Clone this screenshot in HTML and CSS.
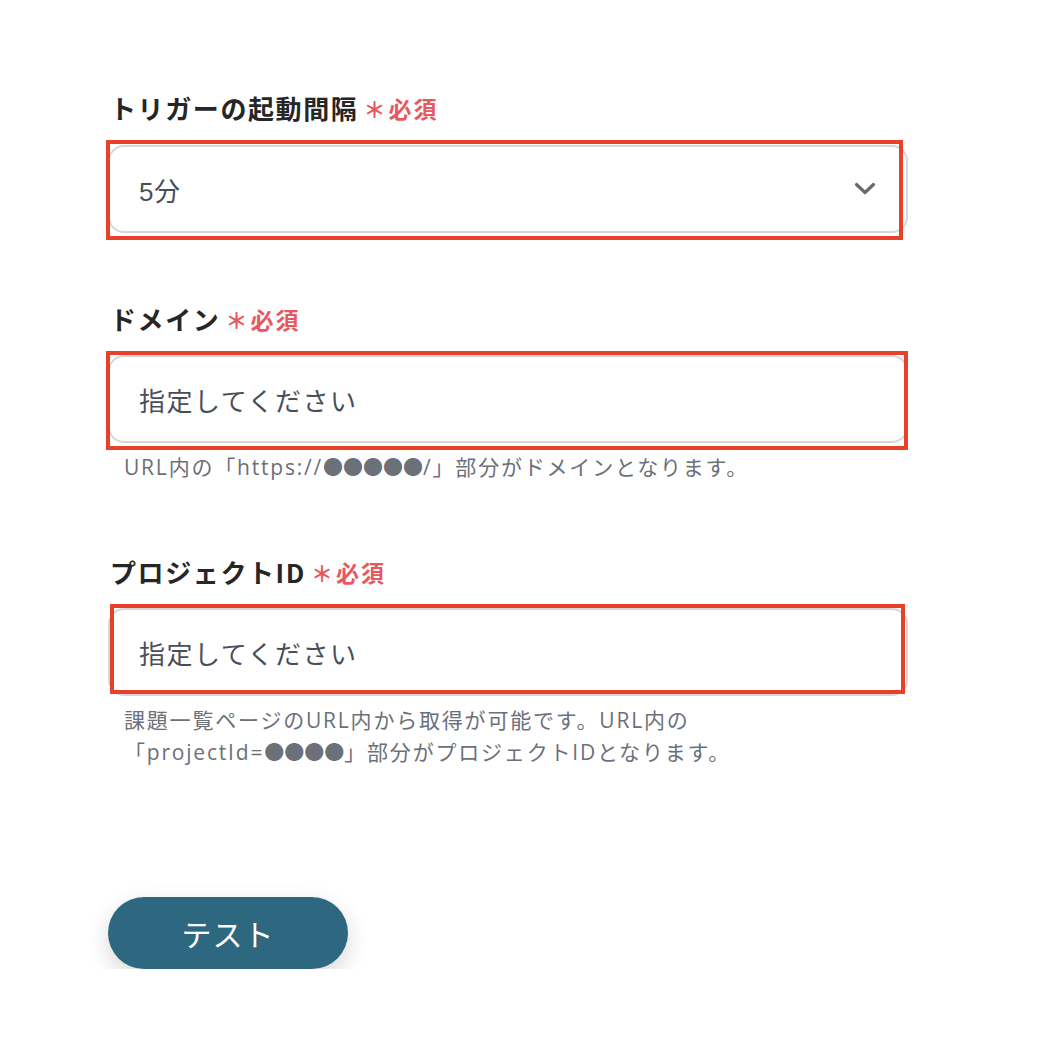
FILE: index.html
```html
<!DOCTYPE html>
<html lang="ja">
<head>
<meta charset="utf-8">
<link rel="stylesheet" href="styles.css">
</head>
<body>
<div class="form">
  <div class="field field-1">
    <div class="label">トリガーの起動間隔<span class="req"><span class="ast">＊</span>必須</span></div>
    <div class="control">
      <div class="input select">
        <span class="value">5分</span>
        <svg class="chev" width="22" height="14" viewBox="0 0 22 14"><path d="M2.5 2.5 L11 10.5 L19.5 2.5" fill="none" stroke="#6a6a6a" stroke-width="3.2" stroke-linecap="round" stroke-linejoin="round"/></svg>
      </div>
      <span class="mark mark-1"></span>
    </div>
  </div>

  <div class="field field-2">
    <div class="label">ドメイン<span class="req"><span class="ast">＊</span>必須</span></div>
    <div class="control">
      <div class="input"><span class="placeholder">指定してください</span></div>
      <span class="mark mark-2"></span>
    </div>
    <p class="help">URL内の「https://<span class="dots">●●●●●</span>/」部分がドメインとなります。</p>
  </div>

  <div class="field field-3">
    <div class="label">プロジェクトID<span class="req"><span class="ast">＊</span>必須</span></div>
    <div class="control">
      <div class="input"><span class="placeholder">指定してください</span></div>
      <span class="mark mark-3"></span>
    </div>
    <p class="help">課題一覧ページのURL内から取得が可能です。URL内の<br>「projectId=<span class="dots">●●●●</span>」部分がプロジェクトIDとなります。</p>
  </div>

  <button class="btn" type="button">テスト</button>
</div>
</body>
</html>
```
FILE: styles.css
```css
* { box-sizing: border-box; }
html, body { margin: 0; padding: 0; background: #ffffff; }
body {
  font-family: "Liberation Sans", "Noto Sans CJK JP", sans-serif;
  color: #262626;
}
.form {
  width: 1048px;
  padding: 92px 0 0 108px;
  display: flex;
  flex-direction: column;
}
.field { display: flex; flex-direction: column; width: 800px; }
.field-2 { margin-top: 70px; }
.field-3 { margin-top: 73px; }
.label {
  font-family: "Noto Sans CJK JP", sans-serif;
  font-weight: 700;
  font-size: 26px;
  line-height: 32px;
  letter-spacing: 1.6px;
  color: #262626;
  display: flex;
  align-items: center;
  padding-left: 2px;
}
.req {
  display: inline-flex;
  align-items: center;
  color: #e8585f;
  font-size: 23px;
  font-weight: 700;
  letter-spacing: 2px;
  margin-left: 5px;
}
.ast { font-size: 22px; font-weight: 700; margin-right: 3px; letter-spacing: 0; }
.control { position: relative; margin-top: 20px; }
.field-1 .control { margin-top: 21px; }
.input {
  height: 88px;
  border: 2px solid #d3d7dc;
  border-radius: 16px;
  background: #fff;
  display: flex;
  align-items: center;
  padding: 0 29px;
  font-family: "Noto Sans CJK JP", sans-serif;
  font-size: 26px;
  letter-spacing: 1.5px;
  color: #4a4f57;
}
.select { justify-content: space-between; }
.value { font-family: "Liberation Sans", "Noto Sans CJK JP", sans-serif; letter-spacing: 0.5px; }
.chev { margin-right: 1px; }
.mark {
  position: absolute;
  border: 4px solid #e8412a;
  pointer-events: none;
}
.mark-1 { left: -2px; top: -5px; right: 5px; bottom: -7px; }
.mark-2 { left: -2px; top: -4px; right: 0; bottom: -7px; }
.mark-3 { left: 2px; top: -4px; right: 3px; bottom: 2px; }
.help {
  margin: 8px 0 0 16px;
  font-family: "Open Sans", "Noto Sans CJK JP", sans-serif;
  font-size: 21px;
  line-height: 32px;
  letter-spacing: 1.8px;
  color: #6b7079;
}
.dots {
  font-family: "Noto Sans CJK JP", sans-serif;
  font-size: 20px;
  letter-spacing: 0;
}
.btn {
  margin-top: 129px;
  width: 240px;
  height: 72px;
  border: none;
  border-radius: 36px;
  background: #2e6780;
  color: #ffffff;
  font-family: "Noto Sans CJK JP", sans-serif;
  font-size: 30px;
  letter-spacing: 1px;
  box-shadow: 0 8px 22px rgba(0, 0, 0, 0.16);
  cursor: pointer;
}
```
